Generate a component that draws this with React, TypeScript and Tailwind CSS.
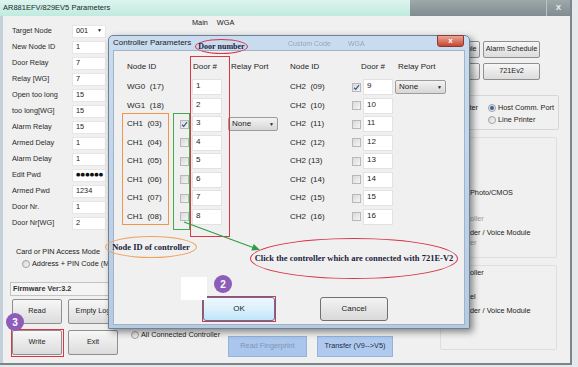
import React from 'react';

const UI = "font-['Liberation_Sans',Arial,sans-serif]";
const NOTE = "font-['Liberation_Serif','Times_New_Roman',serif] font-bold text-[#1c1c3c]";

// ─── Background window data ───────────────────────────────────────────────────
const FIELDS: { label: string; value: string; select?: boolean; pwd?: boolean }[] = [
  { label: 'Target Node', value: '001', select: true },
  { label: 'New Node ID', value: '1' },
  { label: 'Door Relay', value: '7' },
  { label: 'Relay [WG]', value: '7' },
  { label: 'Open too long', value: '15' },
  { label: 'too long[WG]', value: '15' },
  { label: 'Alarm Relay', value: '15' },
  { label: 'Armed Delay', value: '1' },
  { label: 'Alarm Delay', value: '1' },
  { label: 'Edit Pwd', value: '●●●●●●', pwd: true },
  { label: 'Armed Pwd', value: '1234' },
  { label: 'Door Nr.', value: '1' },
  { label: 'Door Nr[WG]', value: '2' },
];

// ─── Dialog data ──────────────────────────────────────────────────────────────
type Row = { id: string; door: string; box?: boolean; on?: boolean; relay?: boolean };

const LEFT: Row[] = [
  { id: 'WG0  (17)', door: '1' },
  { id: 'WG1  (18)', door: '2' },
  { id: 'CH1  (03)', door: '3', box: true, on: true, relay: true },
  { id: 'CH1  (04)', door: '4', box: true },
  { id: 'CH1  (05)', door: '5', box: true },
  { id: 'CH1  (06)', door: '6', box: true },
  { id: 'CH1  (07)', door: '7', box: true },
  { id: 'CH1  (08)', door: '8', box: true },
];

const RIGHT: Row[] = [
  { id: 'CH2  (09)', door: '9', box: true, on: true, relay: true },
  { id: 'CH2  (10)', door: '10', box: true },
  { id: 'CH2  (11)', door: '11', box: true },
  { id: 'CH2  (12)', door: '12', box: true },
  { id: 'CH2 (13)', door: '13', box: true },
  { id: 'CH2  (14)', door: '14', box: true },
  { id: 'CH2  (15)', door: '15', box: true },
  { id: 'CH2  (16)', door: '16', box: true },
];

function Radio({ checked = false }: { checked?: boolean }) {
  return (
    <span className="flex h-[8px] w-[8px] shrink-0 items-center justify-center rounded-full border border-[#a0a0a0] bg-gradient-to-br from-[#d8d8d8] to-[#f6f6f6]">
      {checked && <span className="h-[4px] w-[4px] rounded-full bg-[#2f62a8]" />}
    </span>
  );
}

function Check({ on = false }: { on?: boolean }) {
  return (
    <span className="flex h-[9px] w-[9px] items-center justify-center border border-[#b8b8b8] bg-gradient-to-br from-[#dadada] to-[#f5f5f5]">
      {on && (
        <svg viewBox="0 0 8 8" className="h-[7px] w-[7px]">
          <path d="M1.2 4.3 L3.1 6.2 L6.9 1.4" fill="none" stroke="#34558f" strokeWidth="1.3" />
        </svg>
      )}
    </span>
  );
}

function WinBtn({ children, className = '' }: { children: React.ReactNode; className?: string }) {
  return (
    <div
      className={`flex items-center justify-center rounded-[2px] border border-[#8f8f8f] bg-gradient-to-b from-[#f7f7f7] to-[#dcdcdc] text-[7.3px] text-[#1e1e1e] ${className}`}
    >
      {children}
    </div>
  );
}

function NoneSelect() {
  return (
    <div className="flex h-[14px] w-full items-center justify-between rounded-[2px] border border-[#9c9c9c] bg-gradient-to-b from-[#f3f3f3] to-[#d6d6d6] px-[3px] text-[8px]">
      <span>None</span>
      <span className="text-[5px]">▼</span>
    </div>
  );
}

function DoorField({ value }: { value: string }) {
  return (
    <div className="h-[16px] w-[30px] shrink-0 border border-[#e2e2e2] bg-white pl-[3px] pt-[1px] text-[8px] leading-[10px]">
      {value}
    </div>
  );
}

// ─── Background window ────────────────────────────────────────────────────────
function MainWindow() {
  return (
    <div className="flex h-[365px] w-[572px] flex-col border-b-2 border-r-2 border-[#7b858c] bg-[#f0f0f0]">
      {/* Title bar */}
      <div className="flex h-[16px] shrink-0">
        <div className="flex flex-1 items-center bg-gradient-to-b from-[#dcf5ee] to-[#c0eadf] pl-[3px] text-[7.5px] text-[#1d2a2a]">
          AR881EFV/829EV5 Parameters
        </div>
        <div className="flex w-[160px] justify-end bg-gradient-to-b from-[#9ea8ab] to-[#808c91]">
          <div className="flex w-[24px] items-center justify-center border-l border-[#b9c2c5] text-[8px] font-bold text-[#eef2f3]">
            X
          </div>
        </div>
      </div>

      <div className="flex flex-1 border-l-[3px] border-[#c2d0da]">
        {/* Left form */}
        <div className="flex w-[105px] shrink-0 flex-col pl-[9px] pt-[7px]">
          {FIELDS.map((f) => (
            <div key={f.label} className="flex h-[16px] items-center">
              <span className="w-[60px] shrink-0 text-[7.3px] text-[#2a2a2a]">{f.label}</span>
              <span className="flex h-[13px] w-[34px] shrink-0 items-center justify-between overflow-hidden border border-[#e6e6e6] bg-white px-[3px] text-[7.3px]">
                <span className={f.pwd ? "font-['DejaVu_Sans',sans-serif] text-[5px] tracking-[0.2px] text-[#111]" : ''}>
                  {f.value}
                </span>
                {f.select && <span className="text-[5px]">▼</span>}
              </span>
            </div>
          ))}

          <div className="mt-[15px] flex h-[12px] items-center pl-[4px] text-[7.3px]">Card or PIN Access Mode</div>
          <div className="flex h-[12px] items-center gap-[2px] pl-[10px] text-[7.3px]">
            <Radio />
            <span className="whitespace-nowrap">Address + PIN Code (Mode)</span>
          </div>

          <div className="ml-[-2px] mt-[12px] flex h-[14px] w-[100px] shrink-0 items-center border border-[#c4c4c4] bg-[#f4f4f4] pl-[2px] text-[7.3px] font-bold text-[#333]">
            Firmware Ver:3.2
          </div>

          <div className="mt-[3px] flex gap-[6px]">
            <WinBtn className="h-[25px] w-[50px] shrink-0">Read</WinBtn>
            <WinBtn className="h-[25px] w-[50px] shrink-0">Empty Log</WinBtn>
          </div>
          <div className="mt-[6px] flex gap-[6px]">
            <WinBtn className="h-[25px] w-[50px] shrink-0">Write</WinBtn>
            <WinBtn className="h-[25px] w-[50px] shrink-0">Exit</WinBtn>
          </div>
        </div>

        {/* Middle */}
        <div className="flex w-[312px] shrink-0 flex-col pb-[6px]">
          <div className="flex h-[14px] items-center gap-[9px] pl-[84px] text-[7.3px]">
            <span>Main</span>
            <span>WGA</span>
          </div>
          <div className="mt-auto flex h-[28px] items-start pl-[23px]">
            <div className="flex h-[12px] w-[97px] shrink-0 items-center gap-[2px] text-[7.3px]">
              <Radio />
              <span className="whitespace-nowrap">All Connected Controller</span>
            </div>
            <div className="mt-[7px] flex gap-[10px]">
              <div className="flex h-[21px] w-[79px] items-center justify-center border border-[#94b3dc] bg-[#aac6ec] text-[7.3px] text-[#8294b3]">
                Read Fingerprint
              </div>
              <div className="flex h-[21px] w-[76px] items-center justify-center border border-[#94b3dc] bg-[#afcaee] text-[7.3px] text-[#1f2c48]">
                Transfer (V9--&gt;V5)
              </div>
            </div>
          </div>
        </div>

        {/* Right */}
        <div className="flex w-[150px] shrink-0 flex-col">
          <div className="mt-[25px] flex gap-[3px] pl-[5px]">
            <WinBtn className="h-[17px] w-[55px]">Door Schedule</WinBtn>
            <WinBtn className="h-[17px] w-[57px]">Alarm Schedule</WinBtn>
          </div>
          <div className="mt-[5px] flex gap-[3px] pl-[5px]">
            <WinBtn className="h-[17px] w-[55px]">Holiday</WinBtn>
            <WinBtn className="h-[17px] w-[57px]">721Ev2</WinBtn>
          </div>

          <div className="ml-[20px] mt-[15px] flex h-[35px] w-[119px] flex-col rounded-[2px] border border-[#d6d6d6] pt-[6px] text-[7.3px]">
            <div className="flex h-[12px] items-center">
              <span className="w-[37px] text-right">Printer</span>
              <span className="ml-[10px] mr-[2px]">
                <Radio checked />
              </span>
              <span>Host Comm. Port</span>
            </div>
            <div className="flex h-[12px] items-center pl-[47px]">
              <span className="mr-[2px]">
                <Radio />
              </span>
              <span>Line Printer</span>
            </div>
          </div>

          <div className="ml-[20px] mt-[7px] flex h-[121px] w-[117px] flex-col rounded-[2px] border border-[#dedede] pl-[29px] pt-[50px] text-[7.3px]">
            <div className="h-[10px] leading-[10px]">Photo/CMOS</div>
            <div className="mt-[16px] h-[10px] leading-[10px] text-[#999]">oller</div>
            <div className="mt-[4px] h-[10px] leading-[10px]">der / Voice Module</div>
            <div className="h-[10px] leading-[10px] text-[#999]">er</div>
          </div>

          <div className="ml-[20px] mt-[7px] flex h-[85px] w-[117px] flex-col rounded-[2px] border border-[#dedede] pl-[29px] pt-[2px] text-[7.3px]">
            <div className="h-[10px] leading-[10px]">oller</div>
            <div className="mt-[14px] h-[10px] leading-[10px]">el</div>
            <div className="mt-[4px] h-[10px] leading-[10px]">der / Voice Module</div>
          </div>
        </div>
      </div>
    </div>
  );
}

// ─── Controller Parameters dialog ─────────────────────────────────────────────
function ControllerDialog() {
  return (
    <div className="absolute left-[108px] top-[35px] flex h-[294px] w-[362px] flex-col rounded-t-[5px] border border-[#6e8297] bg-gradient-to-b from-[#cadcef] to-[#b6cbe2] shadow-[3px_3px_7px_rgba(0,0,0,0.45)]">
      <div className="relative flex h-[14px] shrink-0 items-center pl-[4px] text-[8px] text-[#1a1a1a]">
        Controller Parameters
        <span className="absolute left-[179px] top-[3px] text-[7px] text-[#93a6bb] blur-[0.5px]">Custom Code</span>
        <span className="absolute left-[239px] top-[3px] text-[7px] text-[#93a6bb] blur-[0.5px]">WGA</span>
        <div className="absolute right-[5px] top-[-1px] flex h-[12px] w-[27px] items-center justify-center rounded-b-[3px] border border-[#8a3a30] bg-gradient-to-b from-[#e9a597] to-[#c7432f] text-[8px] font-bold text-white">
          x
        </div>
      </div>

      <div className="mx-[4px] mb-[3px] flex flex-1 flex-col border border-[#a2b3c5] bg-[#f0f0f0] pb-[3px] text-[8px] text-[#1e1e1e]">
        <div className="mt-[10px] flex h-[12px] items-center pl-[13px]">
          <span className="w-[66px]">Node ID</span>
          <span className="w-[38px]">Door #</span>
          <span className="w-[59px]">Relay Port</span>
          <span className="w-[71px]">Node ID</span>
          <span className="w-[37px]">Door #</span>
          <span>Relay Port</span>
        </div>

        <div className="mt-[5px] flex flex-col">
          {LEFT.map((l, i) => {
            const r = RIGHT[i];
            return (
              <div key={l.id + r.id} className="flex h-[18.5px] items-center pl-[13px]">
                <span className="w-[53px] shrink-0 whitespace-pre">{l.id}</span>
                <span className="w-[12px] shrink-0">{l.box && <Check on={l.on} />}</span>
                <DoorField value={l.door} />
                <span className="ml-[6px] w-[50px] shrink-0">{l.relay && <NoneSelect />}</span>
                <span className="w-[12px] shrink-0" />
                <span className="w-[62px] shrink-0 whitespace-pre">{r.id}</span>
                <span className="w-[11px] shrink-0">{r.box && <Check on={r.on} />}</span>
                <DoorField value={r.door} />
                <span className="ml-[2px] w-[51px] shrink-0">{r.relay && <NoneSelect />}</span>
              </div>
            );
          })}
        </div>

        <div className="mt-auto flex pl-[89px]">
          <div className="flex h-[24px] w-[72px] items-center justify-center rounded-[3px] border border-[#3c7fb1] bg-gradient-to-b from-[#ecf7fd] via-[#dcf1fc] to-[#bfe5f9]">
            OK
          </div>
          <div className="ml-[45px] flex h-[24px] w-[68px] items-center justify-center rounded-[3px] border border-[#707070] bg-gradient-to-b from-[#f3f3f3] to-[#d9d9d9]">
            Cancel
          </div>
        </div>
      </div>
    </div>
  );
}

// ─── Tutorial annotations drawn over the screenshot ───────────────────────────
function Annotations() {
  return (
    <div className="pointer-events-none absolute inset-0">
      {/* highlight boxes */}
      <div className="absolute left-[190px] top-[56px] h-[181px] w-[40px] border-[1.5px] border-[#dc3545]" />
      <div className="absolute left-[173px] top-[113px] h-[117px] w-[17px] border-[1.5px] border-[#45a84b]" />
      <div className="absolute left-[122px] top-[113px] h-[112px] w-[47px] border-[1.5px] border-[#f0954a]" />
      <div className="absolute left-[202px] top-[296px] h-[26px] w-[74px] border-[1.5px] border-[#dc3545]" />
      <div className="absolute left-[11px] top-[329px] h-[28px] w-[53px] border-[1.5px] border-[#dc3545]" />

      {/* stray white patch */}
      <div className="absolute left-[181px] top-[277px] h-[23px] w-[26px] bg-white" />

      {/* callouts */}
      <div className={`absolute left-[195px] top-[39px] flex h-[15px] w-[53px] items-center justify-center rounded-[50%] border-[1.5px] border-[#d6334a] text-[8px] ${NOTE}`}>
        Door number
      </div>
      <div className={`absolute left-[105px] top-[236px] flex h-[22px] w-[92px] items-center justify-center rounded-[50%] border-[1.5px] border-[#f0a05a] text-[8.5px] ${NOTE}`}>
        Node ID of controller
      </div>
      <div className={`absolute left-[250px] top-[238px] flex h-[41px] w-[208px] items-center justify-center rounded-[50%] border-[1.5px] border-[#d6334a] text-[8.5px] whitespace-nowrap ${NOTE}`}>
        Click the controller which are connected with 721E-V2
      </div>

      <svg className="absolute left-0 top-0" width="578" height="367" viewBox="0 0 578 367">
        <line x1="184" y1="222" x2="253" y2="247.5" stroke="#2f9e44" strokeWidth="1.2" />
        <polygon points="260,250 253.7,243.9 251.3,250.5" fill="#2f9e44" />
      </svg>

      {/* step badges */}
      <div className="absolute left-[214px] top-[275px] flex h-[18px] w-[18px] items-center justify-center rounded-full bg-[#8d5db9] text-[10px] font-bold text-white">
        2
      </div>
      <div className="absolute left-[6px] top-[313px] flex h-[18px] w-[18px] items-center justify-center rounded-full bg-[#8d5db9] text-[10px] font-bold text-white">
        3
      </div>
    </div>
  );
}

export default function App() {
  return (
    <div className={`relative h-[367px] w-[578px] overflow-hidden bg-[#e6e9ec] text-[#222] ${UI}`}>
      <MainWindow />
      <ControllerDialog />
      <Annotations />
    </div>
  );
}
